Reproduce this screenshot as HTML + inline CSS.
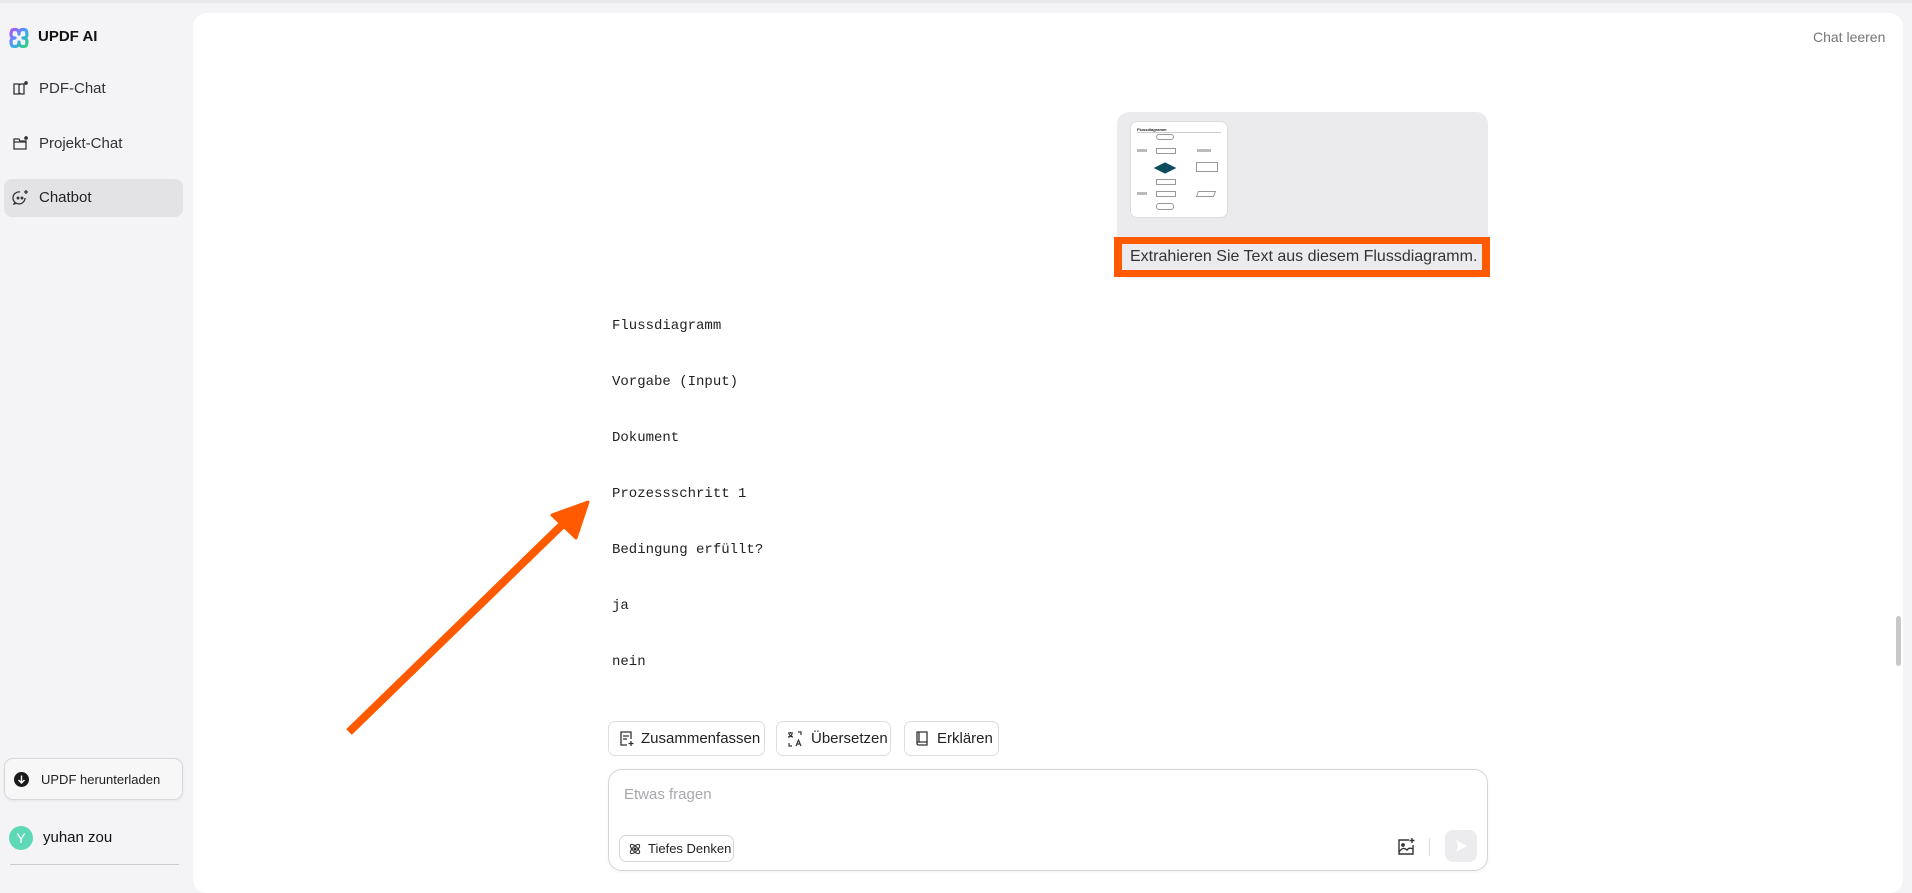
<!DOCTYPE html>
<html><head><meta charset="utf-8">
<style>
*{margin:0;padding:0;box-sizing:border-box}
html,body{width:1912px;height:875px;overflow:hidden;background:#f4f4f6;font-family:"Liberation Sans",sans-serif;color:#222}
.abs{position:absolute}
.topline{left:0;top:0;width:1912px;height:3px;background:#e9e9eb}
.main{left:193px;top:13px;width:1710px;height:880px;background:#fff;border-radius:14px}
.nav{left:12px;font-size:15px;color:#333;display:flex;align-items:center;gap:10px}
.sel{left:4px;top:179px;width:179px;height:38px;background:#e3e3e6;border-radius:8px}
.mono{left:612px;font-family:"Liberation Mono","DejaVu Sans Mono",monospace;font-size:14px;color:#222}
.btn{top:721px;height:35px;border:1px solid #ddd;border-radius:7px;background:#fff;display:flex;align-items:center;gap:7px;padding-left:9px;font-size:15px;color:#222}
</style></head><body>
<div class="abs topline"></div>
<div class="abs main"></div>

<svg class="abs" style="left:8px;top:27px" width="22" height="22" viewBox="0 0 22 22">
<path d="M4 3 Q11 1 11 7 Q11 1 18 3 Q21 11 15 11 Q21 11 18 19 Q11 21 11 15 Q11 21 4 19 Q1 11 7 11 Q1 11 4 3Z" fill="none" stroke="url(#g)" stroke-width="3.2" stroke-linejoin="round"/>
<defs><linearGradient id="g" x1="0" y1="0" x2="1" y2="1"><stop offset="0" stop-color="#b055f0"/><stop offset=".5" stop-color="#3fa0ff"/><stop offset="1" stop-color="#2ed37a"/></linearGradient></defs>
</svg>
<div class="abs" style="left:38px;top:28px;font-size:15px;font-weight:bold;color:#111">UPDF AI</div>

<div class="abs sel"></div>
<div class="abs nav" style="top:80px">
<svg width="17" height="17" viewBox="0 0 17 17" fill="none" stroke="#333" stroke-width="1.3"><path d="M2 4h5v10H2zM7 4q1 1 2 0h3v10H9q-1 -1 -2 0"/><circle cx="14" cy="3" r="1.2" fill="#333"/></svg>
<span>PDF-Chat</span></div>
<div class="abs nav" style="top:135px">
<svg width="17" height="17" viewBox="0 0 17 17" fill="none" stroke="#333" stroke-width="1.3"><path d="M2 4h5l1 2h6v8H2zM2 7h12"/><circle cx="14" cy="3" r="1.2" fill="#333"/></svg>
<span>Projekt-Chat</span></div>
<div class="abs nav" style="top:189px">
<svg width="17" height="17" viewBox="0 0 17 17" fill="none" stroke="#333" stroke-width="1.3"><path d="M13 9a6 6 0 1 1-5-6M3 13l-1 2 3-1"/><circle cx="6" cy="9" r=".8" fill="#333"/><circle cx="10" cy="9" r=".8" fill="#333"/><path d="M14 1v4M12 3h4"/></svg>
<span style="color:#222">Chatbot</span></div>

<div class="abs" style="left:4px;top:758px;width:179px;height:42px;border:1px solid #d8d8da;border-radius:9px;background:#f7f7f8;box-shadow:0 1px 3px rgba(0,0,0,.06)"></div>
<div class="abs" style="left:14px;top:772px;width:15px;height:15px;border-radius:50%;background:#1a1a1a"></div>
<svg class="abs" style="left:14px;top:772px" width="15" height="15" viewBox="0 0 15 15" fill="none" stroke="#fff" stroke-width="1.4"><path d="M7.5 3.5v7M4.5 8l3 3 3-3"/></svg>
<div class="abs" style="left:41px;top:772px;font-size:13px;color:#222">UPDF herunterladen</div>

<div class="abs" style="left:9px;top:826px;width:24px;height:24px;border-radius:50%;background:#5fd8b8;color:#fff;font-size:14px;text-align:center;line-height:24px">Y</div>
<div class="abs" style="left:43px;top:829px;font-size:15px;color:#111">yuhan zou</div>
<div class="abs" style="left:10px;top:864px;width:169px;height:1px;background:#ccc"></div>

<div class="abs" style="left:1813px;top:29px;font-size:14px;color:#777">Chat leeren</div>

<div class="abs" style="left:1117px;top:112px;width:371px;height:166px;background:#ebebed;border-radius:12px"></div>
<div class="abs" style="left:1130px;top:121px;width:98px;height:97px;background:#fff;border:1px solid #ddd;border-radius:7px;overflow:hidden">
<div style="margin:5px 6px;font-size:4px;font-weight:bold;border-bottom:1px solid #ccc">Flussdiagramm</div>
<div style="position:absolute;left:25px;top:12px;width:18px;height:6px;border:1px solid #999;border-radius:3px"></div>
<div style="position:absolute;left:25px;top:26px;width:20px;height:6px;border:1px solid #999"></div>
<div style="position:absolute;left:6px;top:27px;width:10px;height:3px;background:#bbb"></div>
<div style="position:absolute;left:66px;top:27px;width:14px;height:3px;background:#bbb"></div>
<div style="position:absolute;left:26px;top:38px;width:16px;height:16px;background:#0d4c5e;transform:scaleY(.5) rotate(45deg)"></div>
<div style="position:absolute;left:65px;top:40px;width:22px;height:10px;border:1px solid #999"></div>
<div style="position:absolute;left:25px;top:57px;width:20px;height:6px;border:1px solid #999"></div>
<div style="position:absolute;left:6px;top:70px;width:10px;height:3px;background:#bbb"></div>
<div style="position:absolute;left:25px;top:69px;width:20px;height:6px;border:1px solid #999"></div>
<div style="position:absolute;left:66px;top:69px;width:18px;height:6px;border:1px solid #999;transform:skewX(-20deg)"></div>
<div style="position:absolute;left:25px;top:81px;width:18px;height:7px;border:1px solid #999;border-radius:3px"></div>
</div>
<div class="abs" style="left:1114px;top:237px;width:376px;height:40px;background:#ff5a00"></div>
<div class="abs" style="left:1122px;top:244px;width:360px;height:26px;background:#ebebed;font-size:16px;line-height:26px;padding-left:8px;color:#333;white-space:nowrap">Extrahieren Sie Text aus diesem Flussdiagramm.</div>

<div class="abs mono" style="top:318px">Flussdiagramm</div>
<div class="abs mono" style="top:374px">Vorgabe (Input)</div>
<div class="abs mono" style="top:430px">Dokument</div>
<div class="abs mono" style="top:486px">Prozessschritt 1</div>
<div class="abs mono" style="top:542px">Bedingung erfüllt?</div>
<div class="abs mono" style="top:598px">ja</div>
<div class="abs mono" style="top:654px">nein</div>

<svg class="abs" style="left:0;top:0" width="1912" height="875">
<line x1="349" y1="732" x2="562" y2="525" stroke="#ff5a00" stroke-width="8"/>
<polygon points="588,502 576,538 552,515" fill="#ff5a00" stroke="#ff5a00" stroke-width="3" stroke-linejoin="round"/>
</svg>

<div class="abs btn" style="left:608px;width:157px">
<svg width="16" height="17" viewBox="0 0 16 17" fill="none" stroke="#333" stroke-width="1.3"><path d="M9 15H3V2h10v7"/><path d="M5 6h6M5 9h4M13 11v5M10.5 13.5h5"/></svg>Zusammenfassen</div>
<div class="abs btn" style="left:776px;width:115px">
<svg width="18" height="18" viewBox="0 0 18 18" fill="none" stroke="#333" stroke-width="1.2"><path d="M2 3h5M4.5 2v1M3 4q2 3 4 3M6 4q-1 3-4 3M12 2h3v3M6 16H3v-3M10 16l2.5-6 2.5 6M11 14h3"/></svg>Übersetzen</div>
<div class="abs btn" style="left:904px;width:95px">
<svg width="16" height="17" viewBox="0 0 16 17" fill="none" stroke="#333" stroke-width="1.3"><path d="M3 2h10v13H4.5a1.5 1.5 0 0 1-1.5-1.5zM3 13.5a1.5 1.5 0 0 1 1.5-1.5H13M5 2v10"/></svg>Erklären</div>

<div class="abs" style="left:608px;top:769px;width:880px;height:102px;border:1px solid #d5d5d8;border-radius:14px;background:#fff;box-shadow:0 1px 3px rgba(0,0,0,.06)"></div>
<div class="abs" style="left:624px;top:786px;font-size:15px;color:#a8a8ac">Etwas fragen</div>
<div class="abs" style="left:619px;top:835px;width:115px;height:27px;border:1px solid #d5d5d8;border-radius:7px;display:flex;align-items:center;gap:6px;padding-left:8px;font-size:13px;color:#222">
<svg width="14" height="14" viewBox="0 0 14 14" fill="none" stroke="#333" stroke-width="1.1"><ellipse cx="7" cy="7" rx="6" ry="2.5" transform="rotate(45 7 7)"/><ellipse cx="7" cy="7" rx="6" ry="2.5" transform="rotate(-45 7 7)"/><circle cx="7" cy="7" r="1" fill="#333"/></svg>Tiefes Denken</div>
<svg class="abs" style="left:1396px;top:837px" width="20" height="20" viewBox="0 0 20 20" fill="none" stroke="#333" stroke-width="1.4"><path d="M13 3H3v14h14V8"/><path d="M3 15q4-6 8-2 2-3 6-1"/><circle cx="7" cy="8" r="1.2" fill="#333"/><path d="M16 1v5M13.5 3.5h5"/></svg>
<div class="abs" style="left:1429px;top:838px;width:1px;height:18px;background:#ddd"></div>
<div class="abs" style="left:1445px;top:830px;width:32px;height:32px;border-radius:8px;background:#ececee"></div>
<svg class="abs" style="left:1453px;top:838px" width="16" height="16" viewBox="0 0 16 16"><path d="M3 2l11 6-11 6 2-6z" fill="#fff"/></svg>

<div class="abs" style="left:1896px;top:616px;width:5px;height:50px;border-radius:3px;background:#c8c8c8"></div>
</body></html>
